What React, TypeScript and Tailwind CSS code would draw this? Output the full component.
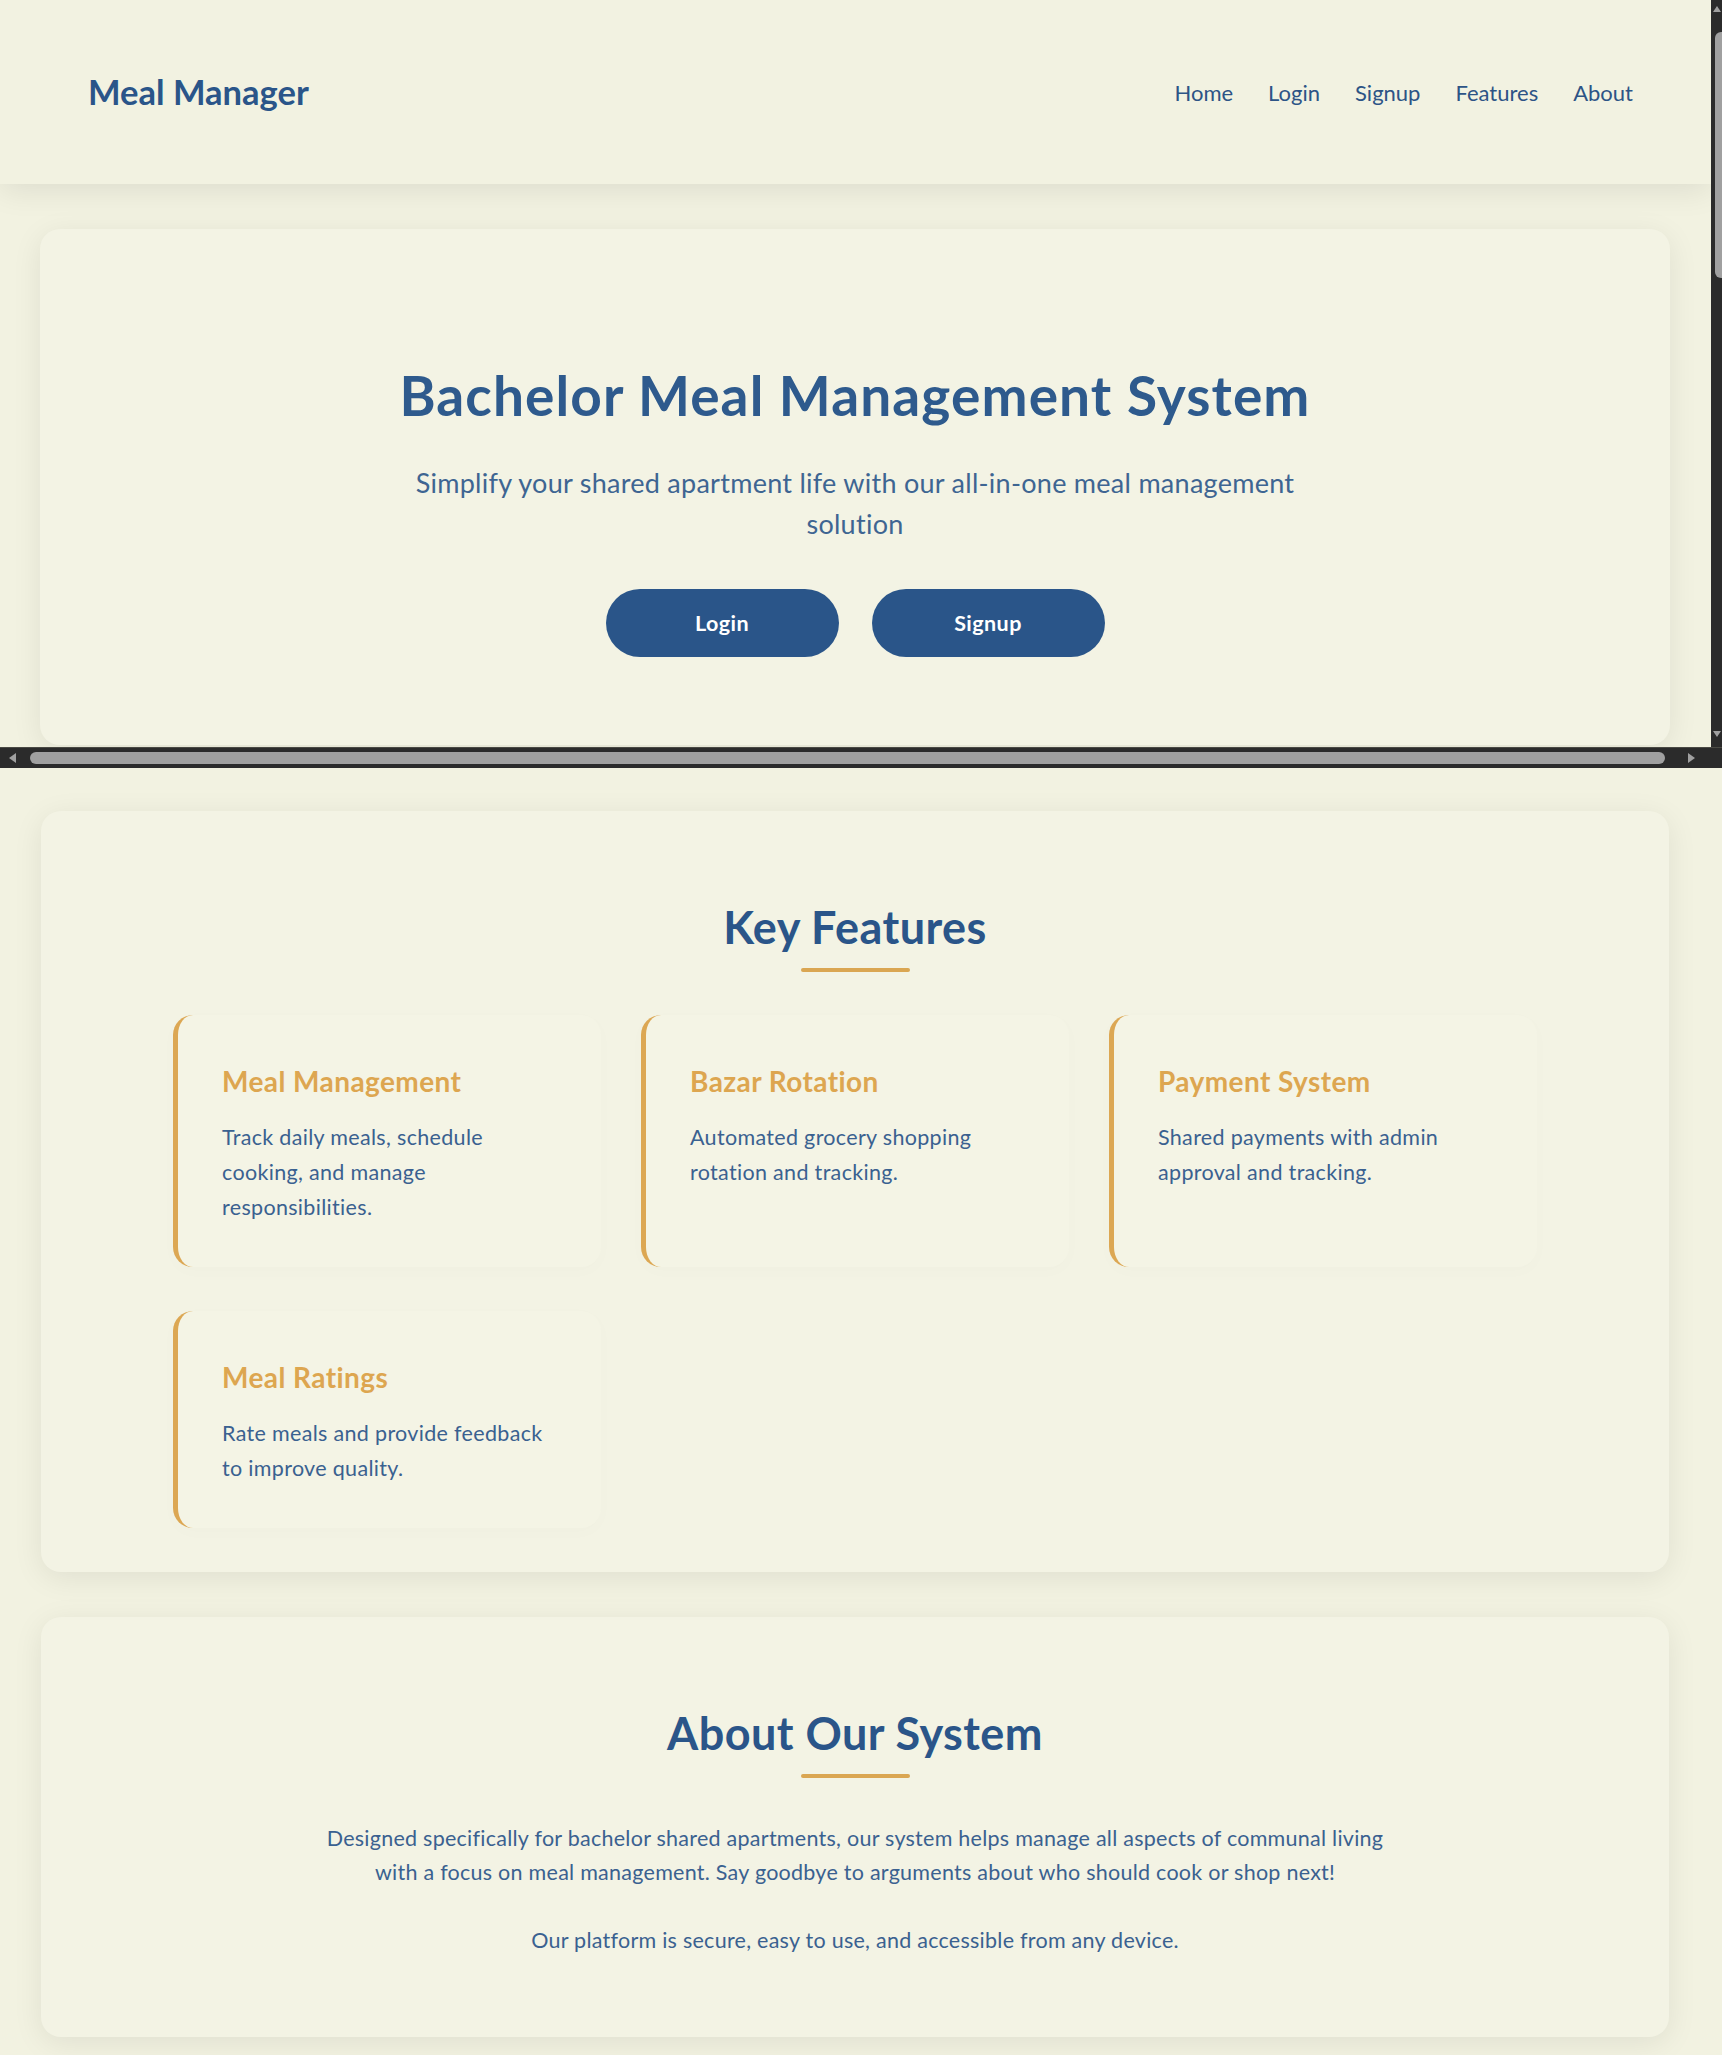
import React from 'react'

const features = [
  { title: 'Meal Management', text: 'Track daily meals, schedule cooking, and manage responsibilities.' },
  { title: 'Bazar Rotation', text: 'Automated grocery shopping rotation and tracking.' },
  { title: 'Payment System', text: 'Shared payments with admin approval and tracking.' },
  { title: 'Meal Ratings', text: 'Rate meals and provide feedback to improve quality.' },
]

const SectionTitle = ({ children }: { children: React.ReactNode }) => (
  <div className="flex flex-col items-center">
    <h2 className="text-[45px] leading-[53px] tracking-[0.01em] font-bold text-[#2a5589]">{children}</h2>
    <div className="mt-[14px] mb-[43px] h-[4px] w-[109px] rounded-full bg-[#daa652]"></div>
  </div>
)

const FeatureCard = ({ title, text }: { title: string; text: string }) => (
  <div className="rounded-[20px] border-l-[5px] border-[#dca753] bg-[#f4f4e5] pt-[51px] pb-[42px] pl-[44px] pr-[51px] shadow-[0_4px_18px_rgba(0,0,0,0.015)]">
    <h3 className="text-[28px] leading-[31px] tracking-[0.015em] font-bold text-[#dda650]">{title}</h3>
    <p className="mt-[23px] text-[21.5px] leading-[35px] tracking-[0.015em] text-[#3a6190]">{text}</p>
  </div>
)

const VScrollbar = () => (
  <div className="flex w-[11px] flex-col items-end bg-[#2b2b2b]">
    <div className="mt-[6px] mr-[1px] h-0 w-0 border-x-[4px] border-b-[6px] border-x-transparent border-b-[#a0a0a0]"></div>
    <div className="mt-[20px] h-[246px] w-[7px] rounded-tl-[6px] rounded-bl-[6px] bg-[#a0a0a0]"></div>
    <div className="flex-1"></div>
    <div className="mb-[10px] mr-[1px] h-0 w-0 border-x-[4px] border-t-[6px] border-x-transparent border-t-[#a0a0a0]"></div>
  </div>
)

const HScrollbar = () => (
  <div className="flex h-[21px] items-center bg-[#2b2b2b] pl-[9px] border-t-[1px] border-[#4a4a44]">
    <div className="h-0 w-0 border-y-[5px] border-r-[7px] border-y-transparent border-r-[#a0a0a0]"></div>
    <div className="ml-[14px] h-[12px] w-[1635px] rounded-full bg-[#a0a0a0]"></div>
    <div className="ml-[23px] h-0 w-0 border-y-[5px] border-l-[7px] border-y-transparent border-l-[#a0a0a0]"></div>
  </div>
)

export default function App() {
  return (
    <div className="min-h-screen bg-[#f2f2e1] font-['Lato',sans-serif] text-[#2a5589]">
      {/* framed top viewport */}
      <div className="flex flex-col">
        <div className="flex h-[747px]">
          <div className="flex-1 overflow-hidden bg-[#f2f2e1]">
            <header className="relative z-10 flex h-[184px] items-center justify-between bg-[#f2f2e1] pl-[88px] pr-[78px] shadow-[0_6px_30px_rgba(0,0,0,0.09)]">
              <div className="text-[34.5px] leading-[1.2] font-bold text-[#2a5589]">Meal Manager</div>
              <nav className="flex gap-[35px] text-[22px] text-[#2d5486]">
                <a>Home</a>
                <a>Login</a>
                <a>Signup</a>
                <a>Features</a>
                <a>About</a>
              </nav>
            </header>
            <section className="mt-[45px] ml-[40px] mr-[41px] flex h-[516px] flex-col items-center rounded-[20px] bg-[#f3f3e4] pt-[135px] shadow-[0_6px_30px_rgba(0,0,0,0.08)]">
              <h1 className="text-[55px] leading-[62px] tracking-[0.02em] font-bold text-[#2e5a8d]">Bachelor Meal Management System</h1>
              <p className="mt-[36px] max-w-[960px] text-center text-[27px] leading-[41px] tracking-[0.01em] text-[#3e6592]">
                Simplify your shared apartment life with our all-in-one meal management solution
              </p>
              <div className="mt-[45px] flex gap-[33px]">
                <button className="h-[68px] w-[233px] rounded-full bg-[#2a5589] text-[21.5px] tracking-[0.02em] font-bold text-white">Login</button>
                <button className="h-[68px] w-[233px] rounded-full bg-[#2a5589] text-[21.5px] tracking-[0.02em] font-bold text-white">Signup</button>
              </div>
            </section>
          </div>
          <VScrollbar />
        </div>
        <HScrollbar />
      </div>

      {/* rest of page */}
      <div className="pb-[20px]">
        <section className="mt-[43px] ml-[41px] w-[1628px] rounded-[20px] bg-[#f3f3e4] pt-[90px] pb-[44px] shadow-[0_6px_30px_rgba(0,0,0,0.08)]">
          <SectionTitle>Key Features</SectionTitle>
          <div className="mx-auto grid max-w-[1364px] grid-cols-3 gap-x-[40px] gap-y-[44px]">
            {features.map((f) => (
              <FeatureCard key={f.title} title={f.title} text={f.text} />
            ))}
          </div>
        </section>

        <section className="mt-[45px] ml-[41px] w-[1628px] rounded-[20px] bg-[#f3f3e4] pt-[90px] pb-[80px] shadow-[0_6px_30px_rgba(0,0,0,0.08)]">
          <SectionTitle>About Our System</SectionTitle>
          <div className="mx-auto max-w-[1085px] text-center text-[21.5px] leading-[34px] tracking-[0.012em] text-[#3a6190]">
            <p>
              Designed specifically for bachelor shared apartments, our system helps manage all aspects of communal living with a focus on meal management. Say goodbye to arguments about who should cook or shop next!
            </p>
            <p className="mt-[34px]">Our platform is secure, easy to use, and accessible from any device.</p>
          </div>
        </section>
      </div>
    </div>
  )
}
